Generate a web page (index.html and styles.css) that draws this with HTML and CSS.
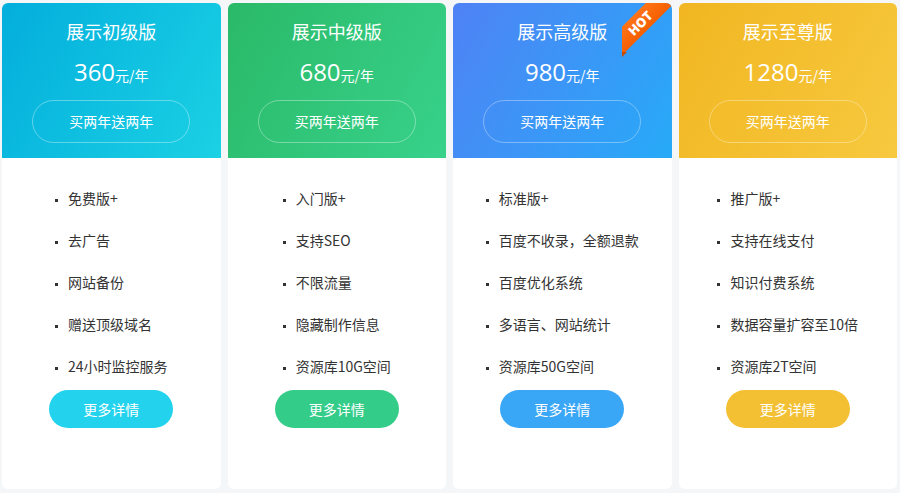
FILE: index.html
```html
<!DOCTYPE html>
<html lang="zh-CN">
<head>
    <meta charset="UTF-8">
    <meta name="viewport" content="width=device-width, initial-scale=1.0">
    <title>展示版本价格</title>
    <link rel="stylesheet" href="styles.css">
</head>
<body>

    <!-- Price plans -->
    <div class="plans">

        <div class="plan plan-basic">
            <div class="plan-head">
                <h2>展示初级版</h2>
                <div class="price"><span class="num">360</span>元/年</div>
                <a class="gift">买两年送两年</a>
            </div>
            <div class="plan-body">
                <ul>
                    <li>免费版+</li>
                    <li>去广告</li>
                    <li>网站备份</li>
                    <li>赠送顶级域名</li>
                    <li>24小时监控服务</li>
                </ul>
                <a class="more">更多详情</a>
            </div>
        </div>

        <div class="plan plan-middle">
            <div class="plan-head">
                <h2>展示中级版</h2>
                <div class="price"><span class="num">680</span>元/年</div>
                <a class="gift">买两年送两年</a>
            </div>
            <div class="plan-body">
                <ul>
                    <li>入门版+</li>
                    <li>支持SEO</li>
                    <li>不限流量</li>
                    <li>隐藏制作信息</li>
                    <li>资源库10G空间</li>
                </ul>
                <a class="more">更多详情</a>
            </div>
        </div>

        <div class="plan plan-high">
            <div class="plan-head">
                <div class="hot"><span>HOT</span></div>
                <h2>展示高级版</h2>
                <div class="price"><span class="num">980</span>元/年</div>
                <a class="gift">买两年送两年</a>
            </div>
            <div class="plan-body">
                <ul>
                    <li>标准版+</li>
                    <li>百度不收录，全额退款</li>
                    <li>百度优化系统</li>
                    <li>多语言、网站统计</li>
                    <li>资源库50G空间</li>
                </ul>
                <a class="more">更多详情</a>
            </div>
        </div>

        <div class="plan plan-top">
            <div class="plan-head">
                <h2>展示至尊版</h2>
                <div class="price"><span class="num">1280</span>元/年</div>
                <a class="gift">买两年送两年</a>
            </div>
            <div class="plan-body">
                <ul>
                    <li>推广版+</li>
                    <li>支持在线支付</li>
                    <li>知识付费系统</li>
                    <li>数据容量扩容至10倍</li>
                    <li>资源库2T空间</li>
                </ul>
                <a class="more">更多详情</a>
            </div>
        </div>

    </div>

</body>
</html>
```

FILE: styles.css
```css
body {
    margin: 0;
    padding: 0;
    background-color: #f4f6f8;
    font-family: "Noto Sans CJK SC", "Microsoft YaHei", sans-serif;
    color: #333;
}

.plans {
    display: flex;
    gap: 7px;
    padding: 3px 3px 5px 2px;
}

.plan {
    flex: 1;
    background-color: #fff;
    border-radius: 6px;
    overflow: hidden;
    position: relative;
}

/* Coloured top */
.plan-head {
    position: relative;
    display: flex;
    flex-direction: column;
    align-items: center;
    padding: 15px 0 15px;
    color: #fff;
}

.plan-head h2 {
    margin: 0;
    font-size: 18px;
    font-weight: normal;
    line-height: 26px;
}

.price {
    display: flex;
    align-items: baseline;
    height: 30px;
    margin-top: 13px;
    font-size: 14px;
    line-height: 30px;
}

.price .num {
    font-family: "Open Sans", sans-serif;
    font-size: 24px;
}

.gift {
    box-sizing: border-box;
    margin-top: 13px;
    width: 158px;
    height: 43px;
    line-height: 41px;
    border: 1px solid rgba(255, 255, 255, 0.35);
    border-radius: 22px;
    text-align: center;
    font-size: 14px;
    cursor: pointer;
}

.plan-basic .plan-head {
    background: linear-gradient(120deg, #03aedc, #1bd1e4);
}

.plan-middle .plan-head {
    background: linear-gradient(120deg, #2ab968, #38d28b);
}

.plan-high .plan-head {
    background: linear-gradient(120deg, #4f82f5, #27aaf8);
}

.plan-top .plan-head {
    background: linear-gradient(120deg, #f1b621, #f7c93f);
}

/* HOT ribbon */
.hot {
    position: absolute;
    top: 0;
    right: 0;
    width: 50px;
    height: 54px;
    overflow: hidden;
}

.hot span {
    position: absolute;
    left: -22px;
    top: 10px;
    width: 80px;
    height: 20px;
    line-height: 20px;
    background: linear-gradient(to bottom, #ff7418, #f55f00);
    color: #fff;
    font-family: "Open Sans", sans-serif;
    font-size: 13px;
    font-weight: 800;
    text-align: center;
    transform: rotate(-45deg);
}

.hot::after {
    content: "";
    position: absolute;
    left: 0;
    bottom: 0;
    border-top: 5px solid #c94a00;
    border-right: 5px solid transparent;
}

/* White body */
.plan-body {
    display: flex;
    flex-direction: column;
    align-items: center;
    padding: 30px 0 61px;
}

.plan-body ul {
    margin: 0;
    padding: 0;
    list-style: none;
    display: flex;
    flex-direction: column;
    gap: 22px;
}

.plan-body li {
    font-size: 14px;
    line-height: 20px;
    color: #333;
}

.plan-body li::before {
    content: "";
    display: inline-block;
    width: 3px;
    height: 3px;
    background-color: #333;
    margin-right: 10px;
    vertical-align: middle;
}

.more {
    margin-top: 14px;
    width: 124px;
    height: 38px;
    line-height: 38px;
    border-radius: 19px;
    text-align: center;
    color: #fff;
    font-size: 14px;
    cursor: pointer;
}

.plan-basic .more {
    background-color: #23d3ed;
}

.plan-middle .more {
    background-color: #34cc89;
}

.plan-high .more {
    background-color: #3aa6f6;
}

.plan-top .more {
    background-color: #f3c034;
}
```
